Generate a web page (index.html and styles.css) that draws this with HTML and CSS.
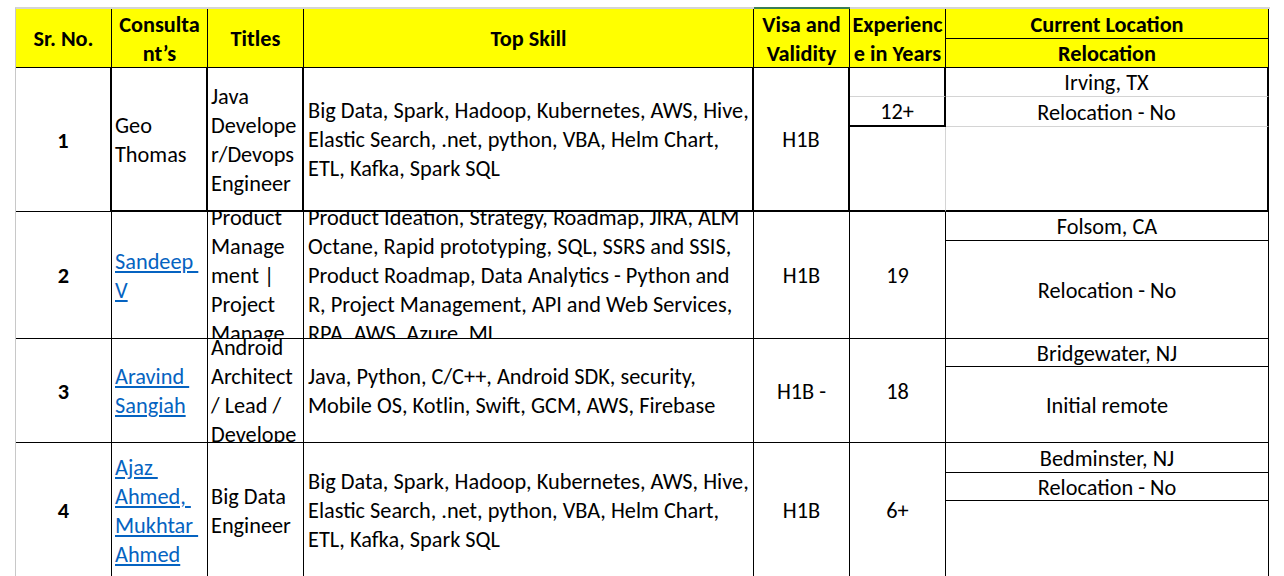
FILE: index.html
```html
<!DOCTYPE html>
<html lang="en">
<head>
<meta charset="utf-8">
<title>Consultants</title>
<link rel="stylesheet" href="styles.css">
</head>
<body>
<div class="sheet">
  <!-- header -->
  <div class="cell hd span2">Sr. No.</div>
  <div class="cell hd span2"><div>Consulta<br>nt’s</div></div>
  <div class="cell hd span2">Titles</div>
  <div class="cell hd span2">Top Skill</div>
  <div class="cell hd span2 sel"><div>Visa and<br>Validity</div></div>
  <div class="cell hd span2"><div>Experienc<br>e in Years</div></div>
  <div class="cell hd">Current Location</div>
  <div class="cell hd">Relocation</div>

  <!-- row 1 -->
  <div class="cell num span3 r1-sr">1</div>
  <div class="cell left span3 r1-box"><div>Geo<br>Thomas</div></div>
  <div class="cell left span3 r1-box"><div>Java<br>Develope<br>r/Devops<br>Engineer</div></div>
  <div class="cell left skill span3 r1-box"><div>Big Data, Spark, Hadoop, Kubernetes, AWS, Hive,<br>Elastic Search, .net, python, VBA, Helm Chart,<br>ETL, Kafka, Spark SQL</div></div>
  <div class="cell span3 r1-box">H1B</div>
  <div class="cell r1-exp-top"></div>
  <div class="cell r1-loc">Irving, TX</div>
  <div class="cell r1-exp-mid">12+</div>
  <div class="cell r1-loc">Relocation - No</div>
  <div class="cell r1-exp-bot"></div>
  <div class="cell r1-loc-bot"></div>

  <!-- row 2 -->
  <div class="cell num span2">2</div>
  <div class="cell left span2"><div><a class="link">Sandeep&nbsp;</a><br><a class="link">V</a></div></div>
  <div class="cell left span2"><div>Product<br>Manage<br>ment |<br>Project<br>Manage</div></div>
  <div class="cell left skill span2"><div>Product Ideation, Strategy, Roadmap, JIRA, ALM<br>Octane, Rapid prototyping, SQL, SSRS and SSIS,<br>Product Roadmap, Data Analytics - Python and<br>R, Project Management, API and Web Services,<br>RPA, AWS, Azure, ML</div></div>
  <div class="cell span2">H1B</div>
  <div class="cell span2">19</div>
  <div class="cell">Folsom, CA</div>
  <div class="cell">Relocation - No</div>

  <!-- row 3 -->
  <div class="cell num span2">3</div>
  <div class="cell left span2"><div><a class="link">Aravind&nbsp;</a><br><a class="link">Sangiah</a></div></div>
  <div class="cell left span2"><div>Android<br>Architect<br>/ Lead /<br>Develope</div></div>
  <div class="cell left skill span2"><div>Java, Python, C/C++, Android SDK, security,<br>Mobile OS, Kotlin, Swift, GCM, AWS, Firebase</div></div>
  <div class="cell span2">H1B -</div>
  <div class="cell span2">18</div>
  <div class="cell">Bridgewater, NJ</div>
  <div class="cell">Initial remote</div>

  <!-- row 4 -->
  <div class="cell num span3">4</div>
  <div class="cell left span3"><div><a class="link">Ajaz&nbsp;</a><br><a class="link">Ahmed,&nbsp;</a><br><a class="link">Mukhtar&nbsp;</a><br><a class="link">Ahmed</a></div></div>
  <div class="cell left span3"><div>Big Data<br>Engineer</div></div>
  <div class="cell left skill span3"><div>Big Data, Spark, Hadoop, Kubernetes, AWS, Hive,<br>Elastic Search, .net, python, VBA, Helm Chart,<br>ETL, Kafka, Spark SQL</div></div>
  <div class="cell span3">H1B</div>
  <div class="cell span3">6+</div>
  <div class="cell">Bedminster, NJ</div>
  <div class="cell">Relocation - No</div>
  <div class="cell"></div>
</div>
</body>
</html>
```

FILE: styles.css
```css
html, body {
  margin: 0;
  padding: 0;
  background: #ffffff;
  overflow: hidden;
}

body {
  font-family: Carlito, Calibri, "Liberation Sans", sans-serif;
  font-size: 22.3px;
  color: #000000;
}

.sheet {
  margin: 7px 0 0 15px;
  width: 1254px;
  border-top: 2px solid #d4d4d4;
  border-left: 1px solid #c8c8c8;
  display: grid;
  grid-template-columns: 96px 96px 96px 450px 96px 96px 323px;
  grid-template-rows: 30px 29px 29px 30px 85px 29px 98px 28px 76px 30px 28px 77px;
}

.cell {
  box-sizing: border-box;
  border-right: 1px solid #000;
  border-bottom: 1px solid #000;
  display: flex;
  flex-direction: column;
  justify-content: center;
  align-items: center;
  text-align: center;
  overflow: hidden;
  white-space: nowrap;
  line-height: 29px;
  padding-top: 1px;
}

.span2 { grid-row: span 2; }
.span3 { grid-row: span 3; }

.hd {
  background: #ffff00;
  font-weight: bold;
}

.sel {
  box-shadow: 0 -2px 0 #3b7d55;
}

.num {
  font-weight: bold;
}

.left {
  align-items: flex-start;
  text-align: left;
  padding-left: 3px;
}

.skill {
  padding-left: 4px;
}

.link {
  color: #0563c1;
  text-decoration: underline;
}

/* Row 1 has a heavy outline */
.r1-sr {
  border-right-width: 2px;
}

.r1-box {
  border-right-width: 2px;
  border-bottom-width: 2px;
}

.r1-exp-top {
  border-right-width: 2px;
  border-bottom-color: #d4d4d4;
}

.r1-exp-mid {
  border-right-width: 2px;
  border-bottom-width: 2px;
}

.r1-exp-bot {
  border-right-color: #d4d4d4;
  border-bottom-width: 2px;
}

.r1-loc {
  border-right-width: 2px;
  border-bottom-color: #d4d4d4;
}

.r1-loc-bot {
  border-right-width: 2px;
  border-bottom-width: 2px;
}
```
